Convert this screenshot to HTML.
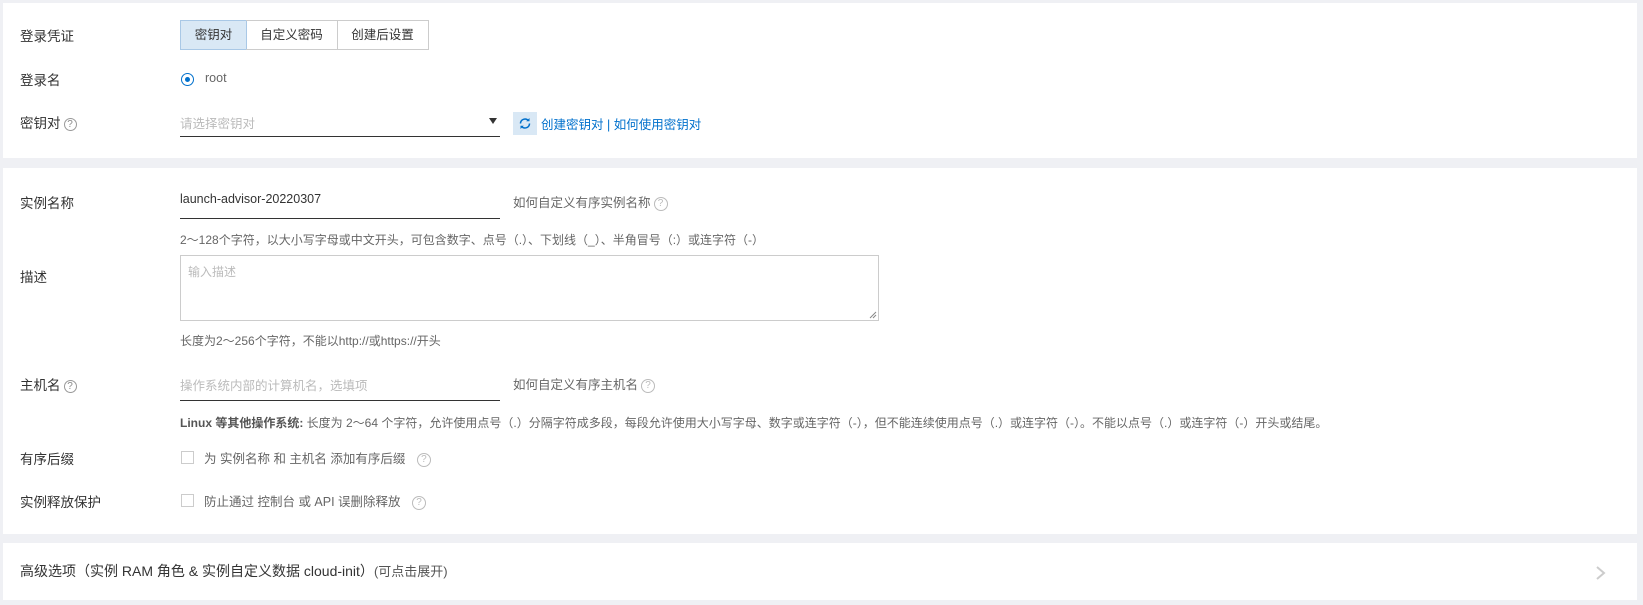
<!DOCTYPE html>
<html><head><meta charset="utf-8"><style>
*{box-sizing:border-box;margin:0;padding:0}
body{width:1643px;height:605px;background:#eff0f4;font-family:"Liberation Sans","Noto Sans CJK SC",sans-serif;font-size:13px;color:#333;position:relative;overflow:hidden}
.p{position:absolute;left:3px;width:1634px;background:#fff}
.a{position:absolute;white-space:nowrap}
.lab{left:20px;font-size:13.5px;color:#333}
.q{display:inline-block;width:13px;height:13px;border:1px solid #999;border-radius:50%;font-size:10px;line-height:11px;text-align:center;color:#888;vertical-align:middle;margin-left:3px}
.ql{border-color:#bbb;color:#bbb;width:14px;height:14px;line-height:12px}
.ul{position:absolute;height:1px;background:#333;left:180px;width:320px}
.ph{color:#bbb}
.hint{color:#666;font-size:12px}
.cb{position:absolute;left:181px;width:13px;height:13px;border:1px solid #ccc;background:#fff}
.seg{position:absolute;top:20px;height:30px;border:1px solid #ccc;line-height:28px;text-align:center;font-size:12.5px}
</style></head><body>
<div class="p" style="top:3px;height:155px"></div>
<div class="p" style="top:168px;height:366px"></div>
<div class="p" style="top:543px;height:57px"></div>

<div class="a lab" style="top:25px">登录凭证</div>
<div class="seg" style="left:180px;width:67px;background:#d9e8f5;border-color:#a9c8e6">密钥对</div>
<div class="seg" style="left:246px;width:92px;border-left:none">自定义密码</div>
<div class="seg" style="left:337px;width:92px;border-left:none">创建后设置</div>

<div class="a lab" style="top:69px">登录名</div>
<div class="a" style="left:181px;top:73px;width:13px;height:13px;border:1px solid #0070cc;border-radius:50%"><div style="position:absolute;left:3px;top:3px;width:5px;height:5px;border-radius:50%;background:#0070cc"></div></div>
<div class="a" style="left:205px;top:71px;color:#666;font-size:12.5px">root</div>

<div class="a lab" style="top:112px">密钥对<span class="q">?</span></div>
<div class="a ph" style="left:180px;top:113px;font-size:12.5px">请选择密钥对</div>
<div class="a" style="left:489px;top:118px;width:0;height:0;border-left:4.5px solid transparent;border-right:4.5px solid transparent;border-top:6px solid #333"></div>
<div class="ul" style="top:136px"></div>
<div class="a" style="left:513px;top:112px;width:24px;height:23px;background:#d9e8f5">
<svg width="24" height="23" viewBox="0 0 24 23"><path d="M7.5 11.5a4.5 4.5 0 0 1 8-2.8M16.5 11.5a4.5 4.5 0 0 1-8 2.8" fill="none" stroke="#0070cc" stroke-width="1.5"/><path d="M16.5 6v3.3h-3.3z" fill="#0070cc"/><path d="M7.5 17v-3.3h3.3z" fill="#0070cc"/></svg></div>
<div class="a" style="left:541px;top:114px;color:#0070cc;font-size:12.5px">创建密钥对 | 如何使用密钥对</div>

<div class="a lab" style="top:192px">实例名称</div>
<div class="a" style="left:180px;top:192px;font-size:12.5px">launch-advisor-20220307</div>
<div class="ul" style="top:218px"></div>
<div class="a" style="left:513px;top:192px;color:#666;font-size:12.5px">如何自定义有序实例名称<span class="q ql">?</span></div>
<div class="a hint" style="left:180px;top:231px">2～128个字符，以大小写字母或中文开头，可包含数字、点号（.）、下划线（_）、半角冒号（:）或连字符（-）</div>

<div class="a lab" style="top:266px">描述</div>
<div class="a" style="left:180px;top:255px;width:699px;height:66px;border:1px solid #ccc"><span class="ph" style="position:absolute;left:7px;top:7px;font-size:12px">输入描述</span>
<svg style="position:absolute;right:1px;bottom:1px" width="8" height="8"><path d="M1 7L7 1M4 7L7 4" stroke="#888"/></svg></div>
<div class="a hint" style="left:180px;top:332px">长度为2～256个字符，不能以http://或https://开头</div>

<div class="a lab" style="top:374px">主机名<span class="q">?</span></div>
<div class="a ph" style="left:180px;top:375px;font-size:12.5px">操作系统内部的计算机名，选填项</div>
<div class="ul" style="top:400px"></div>
<div class="a" style="left:513px;top:374px;color:#666;font-size:12.5px">如何自定义有序主机名<span class="q ql">?</span></div>
<div class="a hint" style="left:180px;top:414px"><b style="color:#555">Linux 等其他操作系统:</b> 长度为 2～64 个字符，允许使用点号（.）分隔字符成多段，每段允许使用大小写字母、数字或连字符（-），但不能连续使用点号（.）或连字符（-）。不能以点号（.）或连字符（-）开头或结尾。</div>

<div class="a lab" style="top:448px">有序后缀</div>
<div class="cb" style="top:451px"></div>
<div class="a" style="left:204px;top:448px;color:#666;font-size:12.5px">为 实例名称 和 主机名 添加有序后缀 <span class="q ql" style="margin-left:8px">?</span></div>

<div class="a lab" style="top:491px">实例释放保护</div>
<div class="cb" style="top:494px"></div>
<div class="a" style="left:204px;top:491px;color:#666;font-size:12.5px">防止通过 控制台 或 API 误删除释放 <span class="q ql" style="margin-left:8px">?</span></div>

<div class="a lab" style="top:561px;font-size:14px">高级选项（实例 RAM 角色 &amp; 实例自定义数据 cloud-init）<span style="color:#555;font-size:13px">(可点击展开)</span></div>
<svg class="a" style="left:1595px;top:565px" width="12" height="16"><path d="M2 2l7 6-7 6" fill="none" stroke="#ccc" stroke-width="2"/></svg>
</body></html>
